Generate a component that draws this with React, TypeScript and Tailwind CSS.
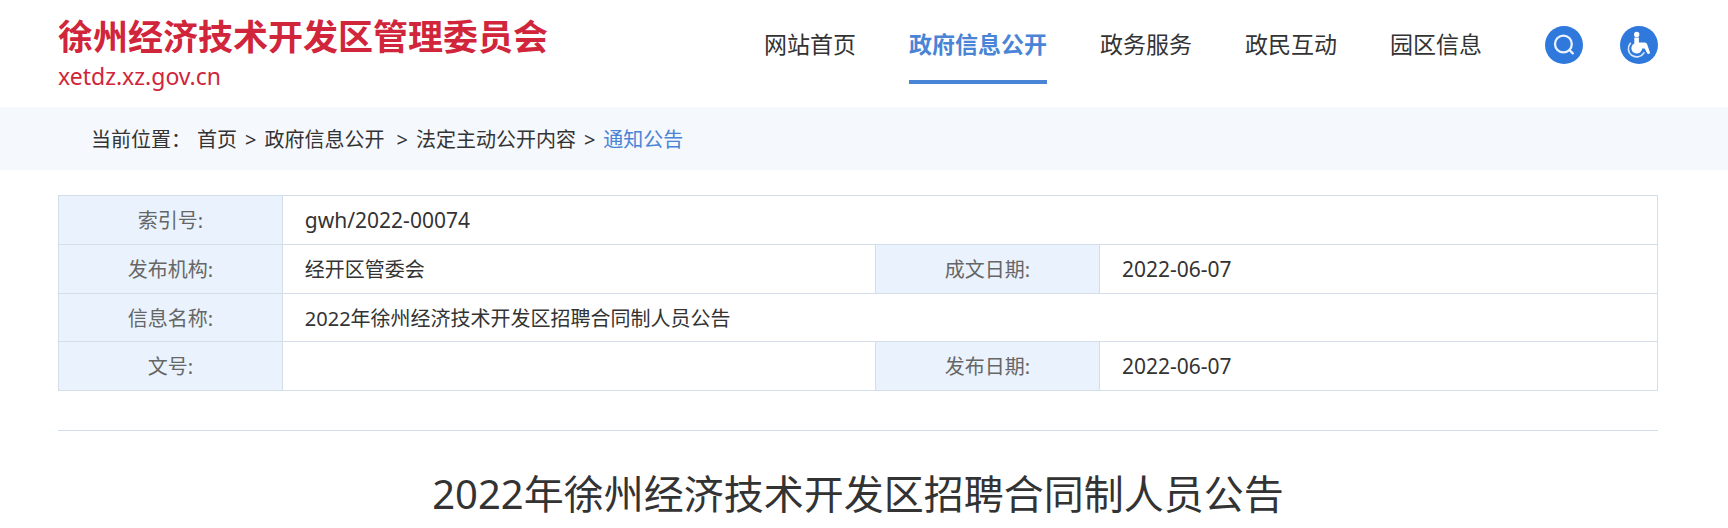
type NavItem = { label: string; active?: boolean };

const navItems: NavItem[] = [
  { label: '网站首页' },
  { label: '政府信息公开', active: true },
  { label: '政务服务' },
  { label: '政民互动' },
  { label: '园区信息' },
];

function SearchIcon() {
  return (
    <svg viewBox="0 0 38 38" className="size-full" aria-hidden="true">
      <circle cx="19" cy="19" r="19" fill="#2f78dc" />
      <g fill="none" stroke="#eaf2fd" strokeWidth="2.3" strokeLinecap="round">
        <circle cx="18.4" cy="18" r="8.4" />
        <path d="M24.4 24 27.8 27.4" />
      </g>
    </svg>
  );
}

function AccessibleIcon() {
  return (
    <svg viewBox="0 0 38 38" className="size-full" aria-hidden="true">
      <circle cx="19" cy="19" r="19" fill="#2f78dc" />
      <circle cx="16.7" cy="8.4" r="2.7" fill="#fff" />
      <path
        d="M14.3 11.6h4.6v5h5.6c1.5 0 2.3.8 2.8 2.2l2.6 7.4c.4 1.8-1.9 2.5-2.7 1l-2.6-4.8h-2.4c-.4 3-2.8 5-5.5 5-3.2 0-5.3-2.300-5.3-5.2 0-2 1-3.6 2.9-4.6z"
        fill="#fff"
      />
      <path
        d="M10.4 17.3c-3.2 4-2.4 9.3 1.3 12 4 2.9 9.8 1.7 12.2-2.5"
        fill="none"
        stroke="#dbe8fa"
        strokeWidth="1.7"
        strokeLinecap="round"
      />
    </svg>
  );
}

function Header() {
  return (
    <header className="flex h-[107px] items-start justify-between pl-[58px] pr-[70px]">
      <a href="#" className="block text-[#d0253a]">
        <span className="mt-3 block text-[35px] font-bold leading-[50px]">徐州经济技术开发区管理委员会</span>
        <span className="block text-[23px] leading-7">xetdz.xz.gov.cn</span>
      </a>
      <div className="flex">
        <nav className="flex gap-[53px] text-[23px]">
          {navItems.map((item) => (
            <a
              key={item.label}
              href="#"
              className={
                item.active
                  ? 'h-[84px] border-b-4 border-[#4a84d6] font-bold leading-[88px] text-[#4a84d6]'
                  : 'h-[84px] leading-[88px] text-[#333]'
              }
            >
              {item.label}
            </a>
          ))}
        </nav>
        <div className="ml-[63px] mt-[26px] flex gap-[37px]">
          <button type="button" aria-label="搜索" className="size-[38px] rounded-full">
            <SearchIcon />
          </button>
          <button type="button" aria-label="无障碍" className="size-[38px] rounded-full">
            <AccessibleIcon />
          </button>
        </div>
      </div>
    </header>
  );
}

function Breadcrumb() {
  return (
    <nav className="flex h-[63px] items-center bg-[#f5f8fd] pl-[91px] pt-0.5 text-xl text-[#333]">
      <span className="mr-1.5">当前位置：</span>
      <a href="#">首页</a>
      <span className="mx-2">&gt;</span>
      <a href="#">政府信息公开</a>
      <span className="ml-3 mr-2">&gt;</span>
      <a href="#">法定主动公开内容</a>
      <span className="mx-2">&gt;</span>
      <a href="#" className="text-[#4a84d6]">通知公告</a>
    </nav>
  );
}

const thClass = 'border border-[#d3dee9] bg-[#eaf3fd] pt-0.5 text-center font-normal text-[#666]';
const tdClass = 'border border-[#d3dee9] pl-[22px] pt-0.5 text-[#333]';

function InfoTable() {
  return (
    <table className="w-full table-fixed border-collapse text-xl">
      <colgroup>
        <col className="w-[14%]" />
        <col className="w-[37.1%]" />
        <col className="w-[14%]" />
        <col className="w-[34.9%]" />
      </colgroup>
      <tbody>
        <tr className="h-[49px]">
          <th scope="row" className={thClass}>索引号:</th>
          <td colSpan={3} className={`${tdClass} text-[21px]`}>gwh/2022-00074</td>
        </tr>
        <tr className="h-[49px]">
          <th scope="row" className={thClass}>发布机构:</th>
          <td className={tdClass}>经开区管委会</td>
          <th scope="row" className={thClass}>成文日期:</th>
          <td className={`${tdClass} text-[21px]`}>2022-06-07</td>
        </tr>
        <tr className="h-[48px]">
          <th scope="row" className={thClass}>信息名称:</th>
          <td colSpan={3} className={tdClass}>2022年徐州经济技术开发区招聘合同制人员公告</td>
        </tr>
        <tr className="h-[49px]">
          <th scope="row" className={thClass}>文号:</th>
          <td className={tdClass}></td>
          <th scope="row" className={thClass}>发布日期:</th>
          <td className={`${tdClass} text-[21px]`}>2022-06-07</td>
        </tr>
      </tbody>
    </table>
  );
}

export default function App() {
  return (
    <div className="bg-white font-['Noto_Sans','Noto_Sans_CJK_SC',sans-serif]">
      <Header />
      <Breadcrumb />
      <main className="pb-1 pl-[58px] pr-[70px] pt-[25px]">
        <InfoTable />
        <h1 className="mt-[39px] border-t border-[#cfdeea] pt-[33px] text-center text-[40px] leading-[60px] text-[#333]">
          2022年徐州经济技术开发区招聘合同制人员公告
        </h1>
      </main>
    </div>
  );
}
